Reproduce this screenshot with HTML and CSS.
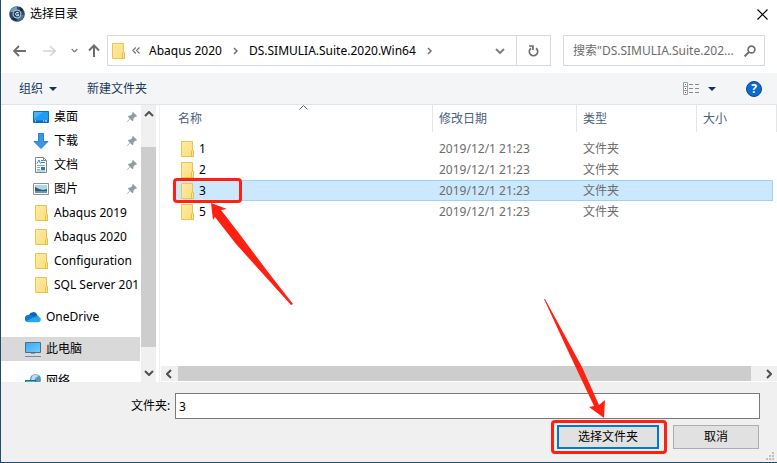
FILE: index.html
```html
<!DOCTYPE html>
<html lang="zh-CN">
<head>
    <meta charset="UTF-8">
    <meta name="viewport" content="width=device-width, initial-scale=1.0">
    <title>选择目录</title>
    <link rel="stylesheet" href="styles.css">
</head>
<body>

    <!-- shared icons -->
    <svg class="sprite" aria-hidden="true">
        <defs>
            <linearGradient id="folder-fill" x1="0" y1="0" x2="1" y2="1">
                <stop offset="0" stop-color="#ffeba6"/>
                <stop offset="1" stop-color="#fddd7c"/>
            </linearGradient>
            <linearGradient id="screen-fill" x1="0" y1="0" x2="1" y2="1">
                <stop offset="0" stop-color="#3aa5f5"/>
                <stop offset="1" stop-color="#6fd0ff"/>
            </linearGradient>
        </defs>
        <symbol id="folder" viewBox="0 0 13 16">
            <path d="M.5.5h11v9h1v6H.5z" fill="url(#folder-fill)" stroke="#eac54f"/>
            <path d="M10.500 15V10l1-.8 1 .8v5.500h-2z" fill="#ffe694" stroke="#e5bd48"/>
        </symbol>
        <symbol id="pin" viewBox="0 0 10 10">
            <path d="M6 0l4 4-1 .8-.8-.1L6.500 6.400 6.300 8.600l-.9.7-2.200-2.200L.4 9.900 0 9.500l2.800-2.800L.8 4.600l.8-.9 2.100-.2L5.400 1.800 5.300.8z" fill="#8f9ba5"/>
        </symbol>
        <symbol id="chev-right" viewBox="0 0 5 8">
            <path d="M1 1l3 3-3 3" fill="none" stroke="#707070" stroke-width="1.500"/>
        </symbol>
        <symbol id="chev-down" viewBox="0 0 10 6">
            <path d="M1 1l4 4 4-4" fill="none" stroke="currentColor" stroke-width="2"/>
        </symbol>
    </svg>

    <div class="dialog">
        <div class="title-bar">
            <svg class="app-icon" viewBox="0 0 16 16">
                <circle cx="8" cy="8" r="7.800" fill="#2c4a63"/>
                <path d="M1 6A7.500 7.500 0 0 1 8 .6v3L4 6z" fill="#6f9dbd"/>
                <path d="M15 9a7.500 7.500 0 0 1-6 6l-1-3 4-3z" fill="#4b7797"/>
                <path d="M3 13l2-3 3 5zM11 1l3 3-3 2z" fill="#16293a"/>
                <circle cx="8" cy="8" r="4.500" fill="#9fc0d6"/>
                <circle cx="8" cy="8" r="3.300" fill="#29435a"/>
                <path d="M9.600 6.500H7.500L6.500 8l1 1.700h2V8.200H8.200" fill="none" stroke="#e6f1f8"/>
            </svg>
            <span class="title">选择目录</span>
            <button class="close-btn" aria-label="关闭">
                <svg width="11" height="11" viewBox="0 0 11 11"><path d="M.5.5l10 10M10.500.5l-10 10" stroke="#000" stroke-width="1.200"/></svg>
            </button>
        </div>

        <div class="nav-bar">
            <div class="nav-buttons">
                <button class="back" aria-label="后退"><svg width="13" height="12" viewBox="0 0 13 12"><path d="M1 6h12M6 1L1 6l5 5" fill="none" stroke="#6e6e6e" stroke-width="1.800"/></svg></button>
                <button class="forward" aria-label="前进"><svg width="13" height="12" viewBox="0 0 13 12"><path d="M0 6h12M7 1l5 5-5 5" fill="none" stroke="#d4d4d4" stroke-width="1.600"/></svg></button>
                <button class="recent" aria-label="最近位置"><svg width="7" height="5" viewBox="0 0 10 6"><use href="#chev-down"/></svg></button>
                <button aria-label="上移"><svg width="12" height="13" viewBox="0 0 12 13"><path d="M6 13V2M1 6.500l5-5 5 5" fill="none" stroke="#6e6e6e" stroke-width="2"/></svg></button>
            </div>

            <div class="address">
                <svg class="folder"><use href="#folder"/></svg>
                <svg class="more" width="8" height="7" viewBox="0 0 8 7"><path d="M3.800.5l-3 3 3 3M7.500.5l-3 3 3 3" fill="none" stroke="#707070" stroke-width="1.100"/></svg>
                <button class="crumb">Abaqus 2020</button>
                <svg class="sep"><use href="#chev-right"/></svg>
                <button class="crumb">DS.SIMULIA.Suite.2020.Win64</button>
                <svg class="sep"><use href="#chev-right"/></svg>
                <button class="drop-btn" aria-label="展开"><svg width="10" height="6"><use href="#chev-down"/></svg></button>
                <button class="refresh-btn" aria-label="刷新">
                    <svg width="11" height="12" viewBox="0 0 11 12"><path d="M8 3.200A4.200 4.200 0 1 1 3 3.200" fill="none" stroke="#6e6e6e" stroke-width="1.700"/><path d="M1 1h3.900v4" fill="none" stroke="#6e6e6e" stroke-width="1.700"/></svg>
                </button>
            </div>

            <div class="search">
                <input type="text" aria-label="搜索" placeholder='搜索"DS.SIMULIA.Suite.202...'>
                <svg width="12" height="12" viewBox="0 0 12 12"><circle cx="7.500" cy="4.500" r="3.400" fill="none" stroke="#6e6e6e" stroke-width="1.600"/><path d="M5 7L.6 11.400" stroke="#6e6e6e" stroke-width="2"/></svg>
            </div>
        </div>

        <div class="toolbar">
            <button class="tool organize">组织 <span class="triangle"></span></button>
            <button class="tool">新建文件夹</button>
            <button class="tool view-btn" aria-label="更改视图">
                <svg width="16" height="13" viewBox="0 0 16 13">
                    <path d="M.5.5h4v12h-4zM.5 4.500h4M.5 8.500h4" fill="#fff" stroke="#a0a0a0"/>
                    <path d="M6 2.500h4M12 2.500h4M6 6.500h4M12 6.500h4M6 10.500h4M12 10.500h4" stroke="#8a8a8a"/>
                    <path d="M2 2h1v1H2z" fill="#3b7a4b"/><path d="M2 6h1v1H2z" fill="#2c68c0"/><path d="M2 10h1v1H2z" fill="#d02020"/>
                </svg>
                <span class="triangle"></span>
            </button>
            <button class="help-btn" aria-label="帮助">?</button>
        </div>

        <div class="content">
            <nav class="sidebar">
                <ul class="tree">
                    <li class="sub">
                        <svg class="icon" viewBox="0 0 16 16"><path d="M.5 2.500h15v11H.5z" fill="#1e9bf5" stroke="#0b6fc4"/><path d="M1 3h9L1 10z" fill="#48b2fb"/><path d="M1 11.500h14V13H1z" fill="#0a68b8"/><path d="M2 12h1M10 12h1M12 12h2" stroke="#fff"/></svg>
                        <span>桌面</span><svg class="pin"><use href="#pin"/></svg>
                    </li>
                    <li class="sub">
                        <svg class="icon" viewBox="0 0 16 16"><path d="M5.500.5h5v8h4.500L8 15.500 1 8.500h4.500z" fill="#3797e8" stroke="#2a7fd0"/></svg>
                        <span>下载</span><svg class="pin"><use href="#pin"/></svg>
                    </li>
                    <li class="sub">
                        <svg class="icon" viewBox="0 0 16 16"><path d="M2.500.5h8l3 3v12h-11z" fill="#fff" stroke="#808890"/><path d="M10.500.5v3h3" fill="none" stroke="#808890"/><path d="M4 6.500L6 3l1.500 3.500M8 3.500h2M8 5.500h4" fill="none" stroke="#2a8fd8"/><path d="M4 8.500h8M4 10.500h3M4 12.500h3M4 14h8" stroke="#8cacc0"/><path d="M8 10h4v3H8z" fill="#3277a8"/></svg>
                        <span>文档</span><svg class="pin"><use href="#pin"/></svg>
                    </li>
                    <li class="sub">
                        <svg class="icon" viewBox="0 0 16 16"><path d="M.5 2.500h15v11H.5z" fill="#fff" stroke="#909090"/><path d="M2 4h12v8H2z" fill="#a9d7ee"/><path d="M2 6l4 2 4 1 4-1v2H2z" fill="#32586a"/><path d="M2 10h12v2H2z" fill="#6199b0"/></svg>
                        <span>图片</span><svg class="pin"><use href="#pin"/></svg>
                    </li>
                    <li class="sub"><svg class="folder"><use href="#folder"/></svg><span>Abaqus 2019</span></li>
                    <li class="sub"><svg class="folder"><use href="#folder"/></svg><span>Abaqus 2020</span></li>
                    <li class="sub"><svg class="folder"><use href="#folder"/></svg><span>Configuration</span></li>
                    <li class="sub"><svg class="folder"><use href="#folder"/></svg><span>SQL Server 201</span></li>
                    <li class="root">
                        <svg class="icon" viewBox="0 0 16 16"><path d="M4 6a4.500 4.500 0 0 1 8-.8L13 8 4 12z" fill="#0a64b8"/><path d="M3.500 6C6 5 8 7 10 8.500L3 13A3.500 3.500 0 0 1 3.500 6z" fill="#0f78d4"/><path d="M9 8.200c1-1.800 3-2.200 4.500-1.200L14 10H8z" fill="#1490df"/><path d="M1.500 12L9 8.200c2 .3 3-.6 4.700-.4 3 .8 2.800 5.200-.5 5.500H4c-1 0-2-.4-2.500-1.300z" fill="#28a8ea"/></svg>
                        <span>OneDrive</span>
                    </li>
                    <li class="root active">
                        <svg class="icon" viewBox="0 0 16 16"><path d="M.5 1.500h15v10H.5z" fill="url(#screen-fill)" stroke="#47708c"/><path d="M6 12h4v1H6z" fill="#8aa0b0"/><path d="M0 15.500h16" stroke="#6f8ba2"/></svg>
                        <span>此电脑</span>
                    </li>
                    <li class="root">
                        <svg class="icon" viewBox="0 0 16 16"><circle cx="10.500" cy="6.500" r="5.500" fill="#5598b8"/><path d="M7 3.500c2-2.500 5-2.500 6.500-.5l-3 2-1.500 3-3-1z" fill="#b9dcea"/><path d="M.5 7.500h10v7H.5z" fill="#42b1f2" stroke="#25658c"/></svg>
                        <span>网络</span>
                    </li>
                </ul>
                <div class="v-scroll">
                    <svg width="10" height="6" class="up"><use href="#chev-down"/></svg>
                    <div class="thumb"></div>
                    <svg width="10" height="6"><use href="#chev-down"/></svg>
                </div>
            </nav>

            <div class="main">
                <table class="files">
                    <thead>
                        <tr>
                            <th class="col-name">名称
                                <svg class="sort" width="9" height="5" viewBox="0 0 9 5"><path d="M.5 4.500l4-4 4 4" fill="none" stroke="#606060"/></svg>
                            </th>
                            <th class="col-date">修改日期</th>
                            <th class="col-type">类型</th>
                            <th class="col-size">大小</th>
                            <th class="col-end"></th>
                        </tr>
                    </thead>
                    <tbody>
                        <tr>
                            <td class="name"><svg class="folder"><use href="#folder"/></svg><span>1</span></td>
                            <td>2019/12/1 21:23</td><td>文件夹</td><td></td>
                        </tr>
                        <tr>
                            <td class="name"><svg class="folder"><use href="#folder"/></svg><span>2</span></td>
                            <td>2019/12/1 21:23</td><td>文件夹</td><td></td>
                        </tr>
                        <tr class="selected">
                            <td class="name"><svg class="folder"><use href="#folder"/></svg><span>3</span>
                                <div class="mark mark-row"></div>
                                <svg class="arrow arrow-row" viewBox="0 0 82 103"><path d="M0 0L16 6 10 7 27 29 57 69 82 101 80 102 25 41 4 14 2 17z" fill="#ff2012"/></svg>
                            </td>
                            <td>2019/12/1 21:23</td><td>文件夹</td><td></td>
                        </tr>
                        <tr>
                            <td class="name"><svg class="folder"><use href="#folder"/></svg><span>5</span></td>
                            <td>2019/12/1 21:23</td><td>文件夹</td><td></td>
                        </tr>
                    </tbody>
                </table>
                <div class="h-scroll">
                    <svg width="6" height="10" viewBox="0 0 6 10"><path d="M5 1L1 5l4 4" fill="none" stroke="#505050" stroke-width="2"/></svg>
                    <div class="thumb"></div>
                    <svg width="6" height="10" viewBox="0 0 6 10"><path d="M1 1l4 4-4 4" fill="none" stroke="#505050" stroke-width="2"/></svg>
                </div>
            </div>
        </div>

        <div class="footer">
            <div class="field">
                <label for="folder-name">文件夹:</label>
                <input type="text" id="folder-name" value="3">
            </div>
            <div class="actions">
                <div class="primary">
                    <button class="btn default">选择文件夹</button>
                    <div class="mark mark-btn"></div>
                    <svg class="arrow arrow-btn" viewBox="0 0 62 120"><path d="M0 0L1 0 38 68 55 106 61 101 60 119 45 108 50 107 24 52z" fill="#ff2012"/></svg>
                </div>
                <button class="btn">取消</button>
            </div>
            <svg class="grip" width="8" height="8" viewBox="0 0 8 8"><path d="M6 0h2v2H6zM3 3h2v2H3zM6 3h2v2H6zM0 6h2v2H0zM3 6h2v2H3zM6 6h2v2H6z" fill="#bfbfbf"/></svg>
        </div>
    </div>

</body>
</html>
```
FILE: styles.css
```css
:root {
    --frame: #1d4e69;
    --line: #d9d9d9;
    --panel: #f0f0f0;
    --mark: #ff2012;
    --mainFont: "Noto Sans", "Noto Sans CJK SC", sans-serif;
}
* {
    box-sizing: border-box;
}
body {
    margin: 0;
    font-family: var(--mainFont);
    font-size: 12px;
    line-height: 20px;
    color: #000;
}
button, input {
    font: inherit;
    color: inherit;
}
button {
    border: none;
    background: none;
    padding: 0;
    display: flex;
    align-items: center;
    justify-content: center;
}
svg {
    flex: none;
    display: block;
}
.sprite {
    position: absolute;
    width: 0;
    height: 0;
}
.dialog {
    height: 100vh;
    display: flex;
    flex-direction: column;
    background-color: #fff;
    border-left: 1px solid var(--frame);
    border-bottom: 1px solid var(--frame);
    overflow: hidden;
}
.folder {
    width: 13px;
    height: 16px;
}

/* title */
.title-bar {
    display: flex;
    align-items: center;
    height: 28px;
    padding: 0 9px 0 8px;
}
.app-icon {
    width: 16px;
    height: 16px;
    margin-right: 5px;
}
.close-btn {
    margin-left: auto;
}

/* navigation */
.nav-bar {
    display: flex;
    padding: 7px 12px;
}
.nav-buttons {
    display: flex;
    flex: none;
    align-items: center;
    color: #808080;
    margin-right: 7px;
}
.nav-buttons button {
    justify-content: flex-start;
}
.nav-buttons .back {
    width: 30px;
}
.nav-buttons .forward {
    width: 28px;
}
.nav-buttons .recent {
    width: 17px;
}
.address {
    flex: 1;
    display: flex;
    align-items: center;
    height: 31px;
    border: 1px solid var(--line);
    padding-left: 4px;
}
.more {
    margin: 0 9px 0 7px;
}
.sep {
    width: 5px;
    height: 8px;
    margin: 0 11px;
}
.crumb {
    white-space: nowrap;
}
.drop-btn {
    margin-left: auto;
    width: 32px;
    height: 29px;
    color: #808080;
}
.refresh-btn {
    width: 34px;
    height: 29px;
    border-left: 1px solid var(--line);
}
.search {
    display: flex;
    align-items: center;
    width: 202px;
    height: 31px;
    margin-left: 12px;
    border: 1px solid var(--line);
    padding: 0 8px 0 9px;
}
.search input {
    flex: 1;
    min-width: 0;
    border: none;
    outline: none;
    padding: 0;
}
.search input::placeholder {
    color: #6d6d6d;
    opacity: 1;
}

/* toolbar */
.toolbar {
    display: flex;
    align-items: center;
    height: 32px;
    background-color: #f4f5f7;
    border-bottom: 1px solid #e1e4e8;
    padding: 0 15px 0 18px;
    color: #1e395b;
}
.tool {
    gap: 6px;
}
.organize {
    margin-right: 30px;
}
.triangle {
    border: 4px solid transparent;
    border-top-color: #1b2f5b;
    border-bottom: none;
}
.view-btn {
    margin-left: auto;
    gap: 9px;
}
.help-btn {
    width: 16px;
    height: 16px;
    margin-left: 30px;
    border-radius: 50%;
    border: 1px solid #0b4a94;
    background-color: #0a6bd0;
    color: #fff;
    font-weight: bold;
}

/* content */
.content {
    flex: 1;
    min-height: 0;
    display: flex;
}
.sidebar {
    display: flex;
    width: 159px;
    border-right: 1px solid var(--panel);
    margin-right: 1px;
    overflow: hidden;
}
.tree {
    flex: 1;
    min-width: 0;
    overflow: hidden;
    list-style: none;
    margin: 0 1px 0 0;
    padding: 0;
}
.tree li {
    display: flex;
    align-items: center;
    height: 24px;
    white-space: nowrap;
}
.tree .sub {
    padding-left: 32px;
}
.tree .sub .folder {
    margin: 0 6px 0 2px;
}
.tree .root {
    padding-left: 24px;
    margin-top: 8px;
}
.tree .active {
    background-color: #d9d9d9;
}
.icon {
    width: 16px;
    height: 16px;
    margin-right: 5px;
}
.pin {
    width: 10px;
    height: 10px;
    margin: 0 3px 0 auto;
}
.v-scroll {
    display: flex;
    flex-direction: column;
    align-items: center;
    width: 15px;
    margin-right: 3px;
    padding: 6px 0;
    background-color: var(--panel);
    color: #505050;
}
.v-scroll .up {
    transform: rotate(180deg);
}
.v-scroll .thumb {
    width: 100%;
    height: 200px;
    margin: 30px 0 auto;
    background-color: #cdcdcd;
}
.main {
    flex: 1;
    min-width: 0;
    display: flex;
    flex-direction: column;
    justify-content: space-between;
}

/* file list */
.files {
    table-layout: fixed;
    border-spacing: 0;
    width: calc(100% - 13px);
    margin-left: 13px;
}
.files th {
    position: relative;
    height: 33px;
    padding: 0 0 6px 6px;
    text-align: left;
    font-weight: normal;
    color: #4c607a;
    background: linear-gradient(#e5e5e5, #e5e5e5) right top / 1px 27px no-repeat;
}
.files .col-name {
    padding-left: 4px;
}
.col-date {
    width: 144px;
}
.col-type {
    width: 120px;
}
.files .col-size {
    width: 76px;
    background: none;
}
.files .col-end {
    width: 4px;
    padding: 0;
}
.sort {
    position: absolute;
    top: 0;
    left: calc(50% - 5px);
}
.files td {
    height: 21px;
    padding: 0 0 0 6px;
    line-height: 19px;
    color: #6d6d6d;
    border: 0 solid #99d1ff;
}
.files .name {
    position: relative;
    display: flex;
    align-items: center;
    gap: 5px;
    padding-left: 7px;
    color: #000;
}
.selected td {
    background-color: #cce8ff;
    border-width: 1px 0;
}
.selected td:last-child {
    border-right-width: 1px;
}
.h-scroll {
    display: flex;
    align-items: center;
    height: 15px;
    margin-bottom: 1px;
    padding: 0 5px;
    background-color: var(--panel);
}
.h-scroll .thumb {
    flex: 1;
    height: 15px;
    margin: 0 15px 0 6px;
    background-color: #cdcdcd;
}

/* footer */
.footer {
    position: relative;
    background-color: var(--panel);
    padding: 11px 17px 13px 130px;
}
.field {
    display: flex;
    align-items: center;
    gap: 4px;
}
.field label {
    width: 40px;
    white-space: nowrap;
}
.field input {
    flex: 1;
    height: 26px;
    border: 1px solid #7a7a7a;
    background-color: #fff;
    padding: 0 3px;
}
.actions {
    display: flex;
    justify-content: flex-end;
    gap: 14px;
    margin: 6px 1px 0 0;
}
.primary {
    position: relative;
}
.btn {
    width: 86px;
    height: 24px;
    border: 1px solid #adadad;
    background-color: #e1e1e1;
}
.btn.default {
    width: 102px;
    border: 2px solid #0078d7;
}
.grip {
    position: absolute;
    right: 3px;
    bottom: 2px;
}

/* red highlights */
.mark {
    position: absolute;
    border: 3px solid var(--mark);
    border-radius: 4px;
    pointer-events: none;
}
.mark-row {
    left: -1px;
    top: -3px;
    width: 69px;
    height: 25px;
    z-index: 1;
}
.mark-btn {
    inset: -5px -8px -5px -6px;
}
.arrow {
    position: absolute;
    z-index: 2;
    pointer-events: none;
}
.arrow-row {
    left: 37px;
    top: 22px;
    width: 82px;
    height: 103px;
}
.arrow-btn {
    right: 53px;
    bottom: 30px;
    width: 62px;
    height: 120px;
}
```
